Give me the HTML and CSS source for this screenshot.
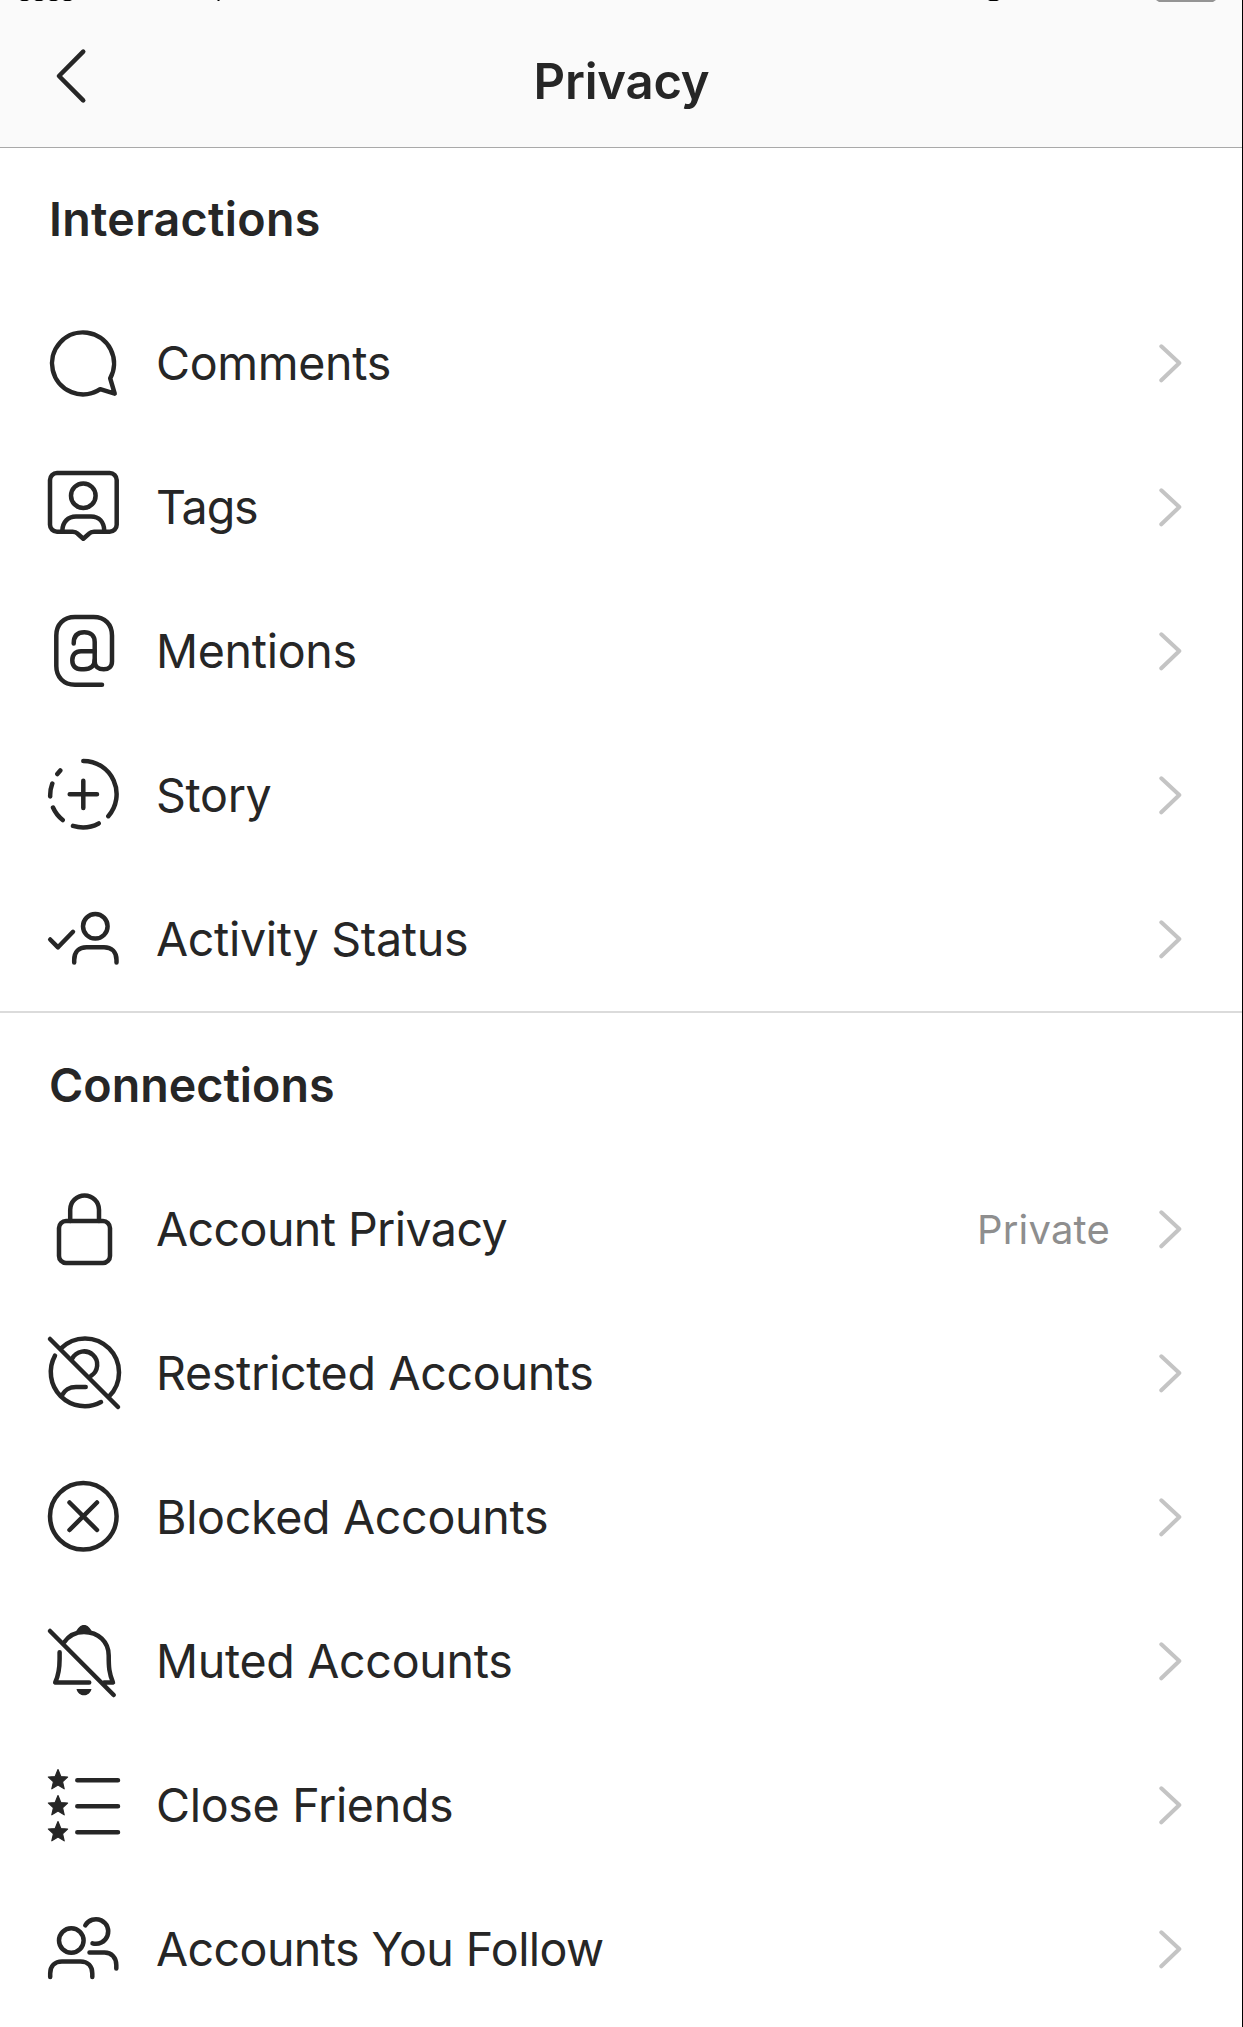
FILE: index.html
```
<!DOCTYPE html>
<html lang="en">
<head>
<meta charset="utf-8">
<title>Privacy</title>
<link rel="stylesheet" href="styles.css">
</head>
<body>
<svg class="sprite" aria-hidden="true">
  <symbol id="chevron" viewBox="0 0 24 40"><path d="M3.3 3.3 21.3 20 3.3 37.3"/></symbol>
</svg>
<div class="screen">
  <header class="header">
    <svg class="status" viewBox="0 0 1243 2" aria-hidden="true">
      <path d="M20 0h9l-2 1h-5zM34.500 0h9l-2 1h-5zM49 0h9l-2 1h-5zM63 0h9l-2 1h-5zM217.500 0h2v1h-2zM988 0h11l-2 1h-7z"/>
      <path class="battery" d="M1156 0h60l-3 2h-54z"/>
    </svg>
    <nav class="nav">
      <a class="back" aria-label="Back"><svg class="back-icon" viewBox="0 0 36 60"><path d="M29.200 5.700 5 30l24.200 24.300"/></svg></a>
      <h1 class="nav-title">Privacy</h1>
    </nav>
  </header>

  <main>
    <section class="group">
      <h2 class="group-title">Interactions</h2>
      <ul class="list">
        <li class="row">
          <svg class="icon" viewBox="0 0 72 72"><path d="M52.200 62.200A31 31 0 1 1 62.200 51.300L66.700 66.700Z"/></svg>
          <span class="label">Comments</span>
          <svg class="chevron"><use href="#chevron"/></svg>
        </li>
        <li class="row">
          <svg class="icon" viewBox="0 0 72 72"><path d="M9 2H61.700a7 7 0 0 1 7 7V53.700a7 7 0 0 1-7 7H46Q43 60.700 41 62.700L35.300 67.700 29.700 62.700Q27.700 60.700 24.700 60.700H9a7 7 0 0 1-7-7V9a7 7 0 0 1 7-7Z"/><circle cx="35.300" cy="24.700" r="12.300"/><path d="M14.300 60C14.500 51 20 45.500 28 45.500H43C51 45.500 56 51 56.300 60"/></svg>
          <span class="label label-tighter">Tags</span>
          <svg class="chevron"><use href="#chevron"/></svg>
        </li>
        <li class="row">
          <svg class="icon" viewBox="0 0 72 72"><path d="M54 69.700H27C15.500 69.700 8.300 62 8.300 51V20.500C8.300 9.500 15.500 2 27 2H45.500C57 2 64 9.500 64 20.500V46.500C64 51.500 60.500 54.300 55.800 54.300C50.500 54.300 46.700 51.500 46.700 46.500V27C46.700 20.500 42.500 17.300 36.300 17.300C30 17.300 25.700 20.500 25.700 28.500"/><path d="M46.700 36.300H33C27.500 36.300 24.300 39.500 24.300 45.300C24.300 51 27.500 54.300 33 54.300H36C42.500 54.300 46.700 51 46.700 45"/></svg>
          <span class="label">Mentions</span>
          <svg class="chevron"><use href="#chevron"/></svg>
        </li>
        <li class="row">
          <svg class="icon" viewBox="0 0 72 72"><path d="M35.300 1.900A33.300 33.300 0 0 1 60.300 57.200M50.700 64.400A33.300 33.300 0 0 1 25 66.900M14.700 61A33.300 33.300 0 0 1 5 48.500M2.200 37.500A33.300 33.300 0 0 1 4.300 24.500M9.300 15 12.300 11.500M35.300 21.700V49M21.700 35.300H49"/></svg>
          <span class="label">Story</span>
          <svg class="chevron"><use href="#chevron"/></svg>
        </li>
        <li class="row">
          <svg class="icon" viewBox="0 0 72 72"><circle cx="47.300" cy="23.300" r="12.300"/><path d="M2.200 36.500 10 44.300 25 28.800M26.200 59.500V57C26.200 49 31 44.300 38.500 44.300H56C63.500 44.300 68.500 49 68.500 57V59.500"/></svg>
          <span class="label">Activity Status</span>
          <svg class="chevron"><use href="#chevron"/></svg>
        </li>
      </ul>
    </section>

    <section class="group">
      <h2 class="group-title group-title-snug">Connections</h2>
      <ul class="list">
        <li class="row">
          <svg class="icon" viewBox="0 0 72 72"><rect x="11" y="28" width="51" height="42" rx="7"/><path d="M22.200 28V16.800a14.400 14.400 0 0 1 28.800 0V28"/></svg>
          <span class="label label-tight">Account Privacy</span>
          <span class="value">Private</span>
          <svg class="chevron"><use href="#chevron"/></svg>
        </li>
        <li class="row">
          <svg class="icon" viewBox="0 0 72 72"><path d="M2 2 70 70M13 11.300A34 34 0 0 1 61 59.500M53 65A34 34 0 0 1 7 18.700M24.300 21.500A13.200 13.200 0 1 1 43 38.800M37.700 50H28C20 50 16.500 53.500 13.500 58.800"/></svg>
          <span class="label">Restricted Accounts</span>
          <svg class="chevron"><use href="#chevron"/></svg>
        </li>
        <li class="row">
          <svg class="icon" viewBox="0 0 72 72"><circle cx="35.300" cy="35.300" r="33.300"/><path d="M21.500 21.500 49 49M49 21.500 21.500 49"/></svg>
          <span class="label">Blocked Accounts</span>
          <svg class="chevron"><use href="#chevron"/></svg>
        </li>
        <li class="row">
          <svg class="icon" viewBox="0 0 72 72"><path d="M2 6 65.700 70M16 17.500C20.500 11 27.500 7 36 7C50.500 7 60.700 17 60.700 30.500C60.700 42 61 48 65 57.500H56M11.600 27.300V34C11.600 44 11 49.500 7.200 57.500H41.200"/><path class="solid" d="M27.500 7.500C30 2.500 32.500 0 36 0S42 2.500 44.500 7.500ZM28.500 64H43.500C42.500 68 39.500 70.300 36 70.300S29.500 68 28.500 64Z"/></svg>
          <span class="label">Muted Accounts</span>
          <svg class="chevron"><use href="#chevron"/></svg>
        </li>
        <li class="row">
          <svg class="icon" viewBox="0 0 72 72"><defs><path id="star" class="star" d="M10 .6 12.800 7.500 19.600 8 14.500 12.700 16.200 19.800 10 16.100 3.800 19.800 5.500 12.700 .4 8 7.200 7.500Z"/></defs><use href="#star"/><use href="#star" y="26"/><use href="#star" y="52"/><path d="M29.300 11.300H70M29.300 37.300H70M29.300 63.300H70"/></svg>
          <span class="label">Close Friends</span>
          <svg class="chevron"><use href="#chevron"/></svg>
        </li>
        <li class="row">
          <svg class="icon" viewBox="0 0 72 72"><circle cx="23.300" cy="27.500" r="12.300"/><path d="M2.200 64V60.500C2.200 53 7 48.500 14 48.500H32.500C39.500 48.500 44.300 53 44.300 60.500V64M37.300 12.300A12.300 12.300 0 1 1 44.500 30.300M41.500 39.500H56.500C63.500 39.500 68.300 44.500 68.300 52V55.500"/></svg>
          <span class="label label-tight">Accounts You Follow</span>
          <svg class="chevron"><use href="#chevron"/></svg>
        </li>
      </ul>
    </section>
  </main>
</div>
</body>
</html>
```
FILE: styles.css
```
* {
  box-sizing: border-box;
}

body {
  margin: 0;
  background: #fff;
  color: #262626;
  font-family: Inter, "Liberation Sans", sans-serif;
}

.sprite {
  display: none;
}

.screen {
  height: 2027px;
  overflow: hidden;
  border-right: 1px solid #000;
}

.header {
  height: 148px;
  background: #fafafa;
  border-bottom: 1px solid #a9a9a9;
}

.status {
  display: block;
  width: 1243px;
  height: 2px;
}

.battery {
  fill: #949494;
}

.nav {
  display: grid;
  grid-template-columns: 1fr auto 1fr;
  align-items: center;
  height: 145px;
  padding: 14px 53px 0 54px;
}

.back {
  display: flex;
  padding-bottom: 11px;
}

.back-icon {
  width: 36px;
  height: 60px;
  fill: none;
  stroke: #262626;
  stroke-width: 4.6;
  stroke-linecap: round;
  stroke-linejoin: round;
}

.nav-title {
  margin: 0;
  font-size: 49px;
  font-weight: 600;
  line-height: 60px;
  letter-spacing: -0.2px;
}

.group + .group {
  border-top: 2px solid #dbdbdb;
}

.group-title {
  height: 144px;
  margin: 0;
  padding-left: 49px;
  font-size: 46.6px;
  font-weight: 600;
  line-height: 144px;
  letter-spacing: 0.3px;
}

.group:first-child .group-title {
  height: 143px;
  line-height: 142px;
}

.group .group-title-snug {
  letter-spacing: 0;
}

.list {
  margin: 0;
  padding: 0;
  list-style: none;
}

.row {
  display: flex;
  align-items: center;
  height: 144px;
  padding: 0 60px 0 48px;
}

.icon {
  flex: none;
  width: 72px;
  height: 72px;
  margin-right: 36px;
  overflow: visible;
  fill: none;
  stroke: #262626;
  stroke-width: 4.5;
  stroke-linecap: round;
  stroke-linejoin: round;
}

.solid {
  fill: #262626;
  stroke: none;
}

.star {
  fill: #262626;
  stroke-width: 1.2;
}

.label {
  flex: 1;
  font-size: 46.6px;
  letter-spacing: -0.33px;
  white-space: nowrap;
}

.label-tight {
  letter-spacing: -0.6px;
}

.label-tighter {
  letter-spacing: -1.1px;
}

.value {
  margin-right: 48px;
  color: #8e8e8e;
  font-size: 40px;
  letter-spacing: 0.2px;
}

.chevron {
  flex: none;
  width: 24px;
  height: 40px;
  fill: none;
  stroke: #c4c4c4;
  stroke-width: 4;
  stroke-linecap: round;
  stroke-linejoin: round;
}
```
